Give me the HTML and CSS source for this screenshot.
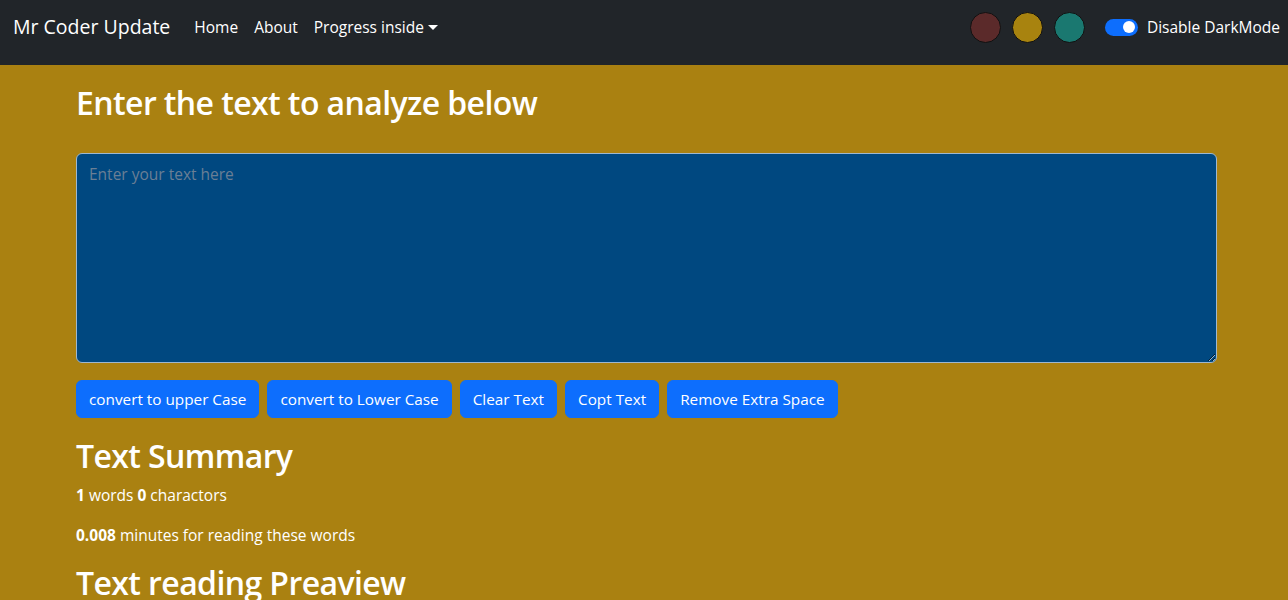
FILE: index.html
```html
<!DOCTYPE html>
<html lang="en">
<head>
<meta charset="utf-8">
<title>Mr Coder Update</title>
<link rel="stylesheet" href="styles.css">
</head>
<body>
<nav class="navbar">
  <div class="nav-left">
    <a class="brand" href="#">Mr Coder Update</a>
    <ul class="nav-links">
      <li><a href="#">Home</a></li>
      <li><a href="#">About</a></li>
      <li><a href="#" class="dropdown">Progress inside</a></li>
    </ul>
  </div>
  <div class="nav-right">
    <div class="swatches">
      <span class="swatch swatch-red"></span>
      <span class="swatch swatch-gold"></span>
      <span class="swatch swatch-teal"></span>
    </div>
    <label class="switch">
      <span class="switch-track"><span class="switch-knob"></span></span>
      <span class="switch-label">Disable DarkMode</span>
    </label>
  </div>
</nav>
<main class="container">
  <h1 class="title">Enter the text to analyze below</h1>
  <textarea class="text-input" rows="8" placeholder="Enter your text here"></textarea>
  <div class="actions">
    <button class="btn">convert to upper Case</button>
    <button class="btn">convert to Lower Case</button>
    <button class="btn">Clear Text</button>
    <button class="btn">Copt Text</button>
    <button class="btn">Remove Extra Space</button>
  </div>
  <h2 class="section">Text Summary</h2>
  <p class="stat"><b>1</b> words <b>0</b> charactors</p>
  <p class="stat"><b>0.008</b> minutes for reading these words</p>
  <h2 class="section">Text reading Preaview</h2>
</main>
</body>
</html>
```
FILE: styles.css
```css
* { box-sizing: border-box; }
html, body { margin: 0; padding: 0; }
body {
  background: #aa8111;
  color: #ffffff;
  font-family: "Segoe UI", "Open Sans", sans-serif;
  font-size: 15.5px;
  line-height: 1.5;
  overflow: hidden;
}
.navbar {
  background: #212529;
  height: 65px;
  padding: 0 8px 11px 13px;
  display: flex;
  justify-content: space-between;
  align-items: center;
}
.nav-left, .nav-right { display: flex; align-items: center; height: 54px; }
.brand {
  color: #fff;
  text-decoration: none;
  font-size: 19.5px;
  line-height: 30px;
  margin-right: 16px;
}
.nav-links { list-style: none; margin: 0; padding: 0; display: flex; }
.nav-links a {
  display: block;
  color: #fff;
  text-decoration: none;
  padding: 8px;
  line-height: 24px;
}
.dropdown::after {
  content: "";
  display: inline-block;
  margin-left: 4px;
  vertical-align: 3px;
  border-top: 5px solid #fff;
  border-left: 5px solid transparent;
  border-right: 5px solid transparent;
}
.swatches { display: flex; gap: 11px; margin-right: 20px; }
.swatch {
  width: 31px; height: 31px;
  border-radius: 50%;
  border: 1px solid #111;
  display: block;
}
.swatch-red { background: #5b2a2a; }
.swatch-gold { background: #a8830f; }
.swatch-teal { background: #1a7870; }
.switch { display: flex; align-items: center; gap: 9px; }
.switch-track {
  width: 33px; height: 17px;
  border-radius: 9px;
  background: #0d6efd;
  position: relative;
  display: block;
}
.switch-knob {
  position: absolute;
  right: 3px; top: 2.5px;
  width: 12px; height: 12px;
  border-radius: 50%;
  background: #fff;
}
.switch-label { color: #fff; font-size: 15.5px; line-height: 24px; }
.container { width: 1141px; margin: 0 0 0 76px; padding-top: 19px; }
.title, .section {
  font-size: 32px;
  font-weight: 600;
  letter-spacing: -0.6px;
  line-height: 1.2;
  margin: 0 0 8px;
}
.text-input {
  display: block;
  width: 100%;
  height: 210px;
  margin: 31px 0 17px;
  background: #004880;
  color: #fff;
  border: 1px solid #9fb8cf;
  border-radius: 6px;
  padding: 8px 12px 6px;
  font: inherit;
  line-height: 24px;
  resize: vertical;
}
.text-input::placeholder { color: #6a7f95; opacity: 1; }
.actions { display: flex; gap: 8px; margin-bottom: 19px; }
.btn {
  background: #0d6efd;
  color: #fff;
  border: 1px solid #0d6efd;
  border-radius: 6px;
  padding: 6px 12px;
  font: inherit;
  font-size: 15.3px;
  line-height: 24px;
}
.stat { margin: 0 0 17px; }
.stat b { font-weight: 700; }
```
